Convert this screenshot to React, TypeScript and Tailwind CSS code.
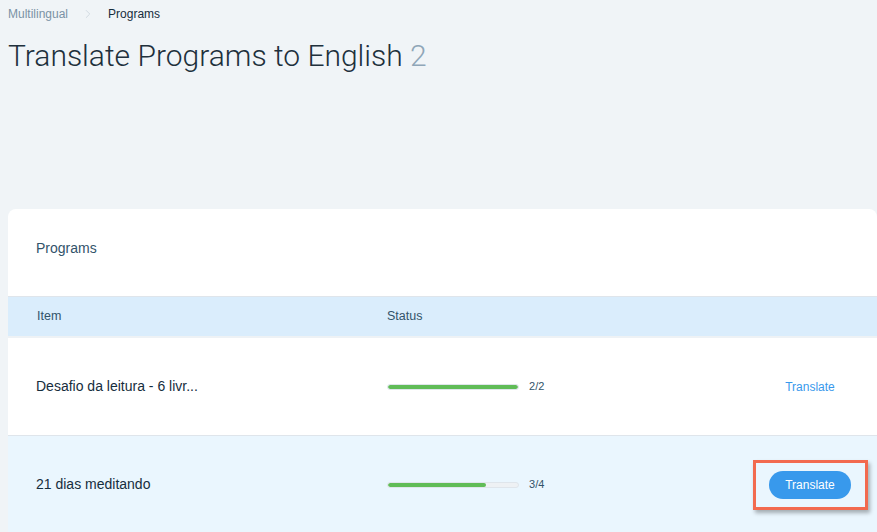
import { ChevronRight } from 'lucide-react'

const rows = [
  { name: 'Desafio da leitura - 6 livr...', done: 2, total: 2, highlighted: false },
  { name: '21 dias meditando', done: 3, total: 4, highlighted: true },
]

function Progress({ done, total }: { done: number; total: number }) {
  return (
    <div className="flex items-center gap-[10px]">
      <div className="h-[6px] w-[132px] overflow-hidden rounded-full border border-[#dfe5eb] bg-[#eef1f4]">
        <div className="h-full rounded-full bg-[#60bc57]" style={{ width: `${(done / total) * 100}%` }} />
      </div>
      <span className="text-[11px] text-[#32536a]">
        {done}/{total}
      </span>
    </div>
  )
}

export default function App() {
  return (
    <div className="h-[532px] overflow-hidden bg-[#f0f4f7] font-['Liberation_Sans',Arial,sans-serif] text-[#162d3d]">
      <div className="px-2 pt-[7px]">
        <nav className="flex items-center text-[12px] leading-[14px]">
          <span className="text-[#7a92a5]">Multilingual</span>
          <ChevronRight className="mx-[13px] h-[14px] w-[14px] text-[#cdd6de]" strokeWidth={1.5} />
          <span className="text-[#162d3d]">Programs</span>
        </nav>
        <h1 className="mt-[17px] font-['Roboto',sans-serif] text-[30px] font-light leading-[36px] text-[#20303c]">
          Translate Programs to English <span className="text-[#8fa6b8]">2</span>
        </h1>
      </div>

      <section className="ml-2 mt-[135px] rounded-t-lg bg-white">
        <div className="flex h-[88px] items-start border-b border-[#dfe5eb] px-[28px] pt-[31px] text-[14px] leading-[16px] text-[#32536a]">
          Programs
        </div>
        <div className="flex h-[41px] items-center border-b-2 border-[#eef2f5] bg-[#daedfc] text-[12.5px] text-[#32536a]">
          <span className="w-[379px] pl-[29px]">Item</span>
          <span>Status</span>
        </div>
        {rows.map((row) => (
          <div
            key={row.name}
            className={`flex h-[98px] items-center border-b border-[#dfe5eb] text-[14px] ${
              row.highlighted ? 'bg-[#eaf6fe]' : 'bg-white'
            }`}
          >
            <span className="w-[379px] pl-[28px] text-[#162d3d]">{row.name}</span>
            <div className="w-[373px]">
              <Progress done={row.done} total={row.total} />
            </div>
            <div className="flex w-[100px] justify-center">
              {row.highlighted ? (
                <div className="flex h-[50px] w-[115px] shrink-0 items-center justify-center border-[3px] border-[#f26a4f] shadow-[2px_3px_4px_rgba(0,0,0,0.3)]">
                  <button className="h-[28px] rounded-full bg-[#3899ec] px-[16px] text-[12px] text-white">
                    Translate
                  </button>
                </div>
              ) : (
                <button className="text-[12px] text-[#3899ec]">Translate</button>
              )}
            </div>
          </div>
        ))}
      </section>
    </div>
  )
}
